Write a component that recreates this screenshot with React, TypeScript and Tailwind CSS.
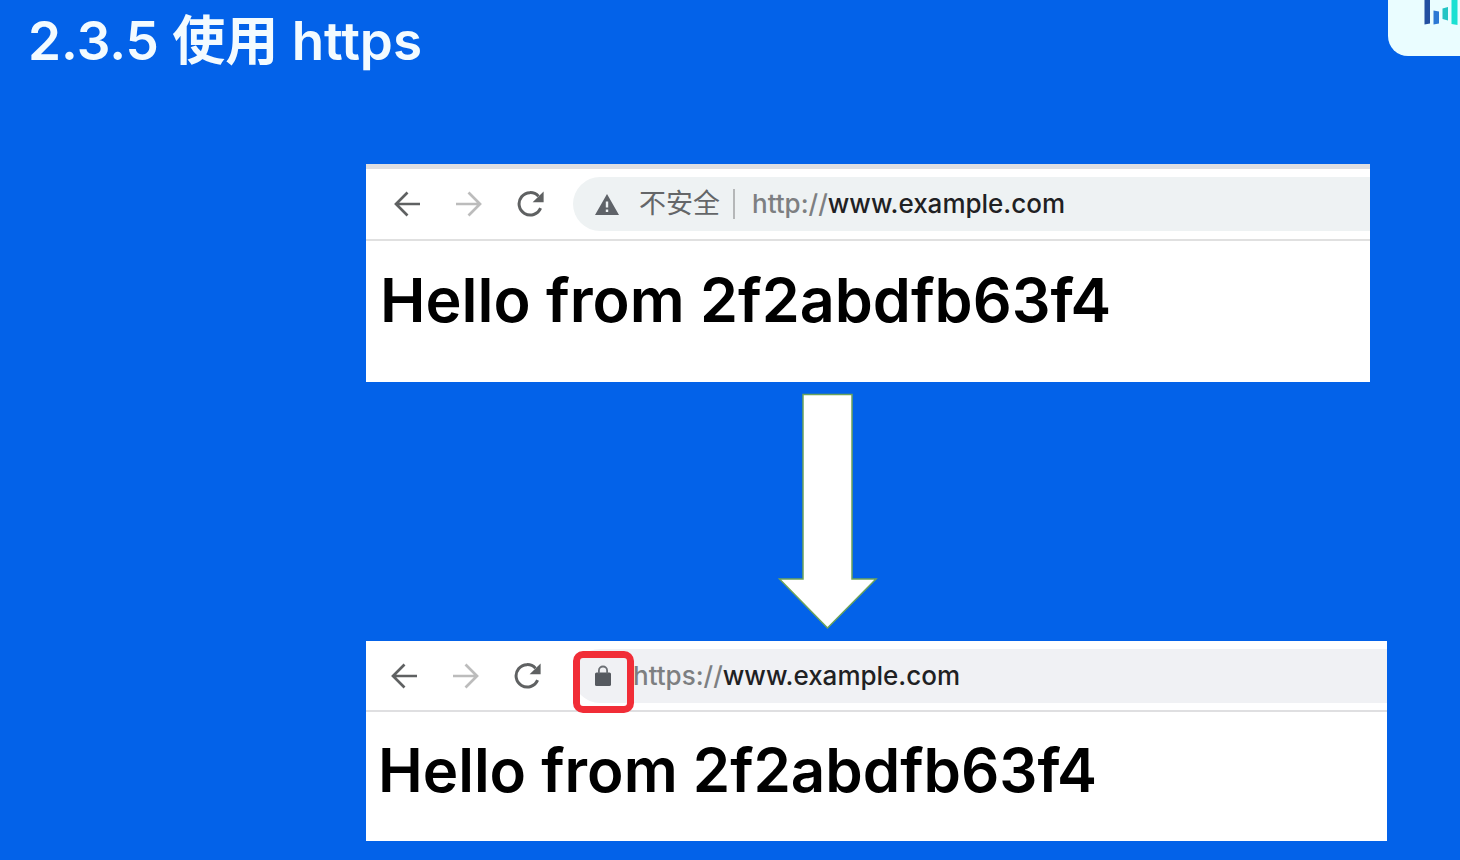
import type { ReactNode } from "react";

function BackIcon() {
  return (
    <svg className="size-7" viewBox="0 0 28 28" fill="none" stroke="currentColor" strokeWidth="2.7" aria-hidden="true">
      <path d="M27 14H3.5M14.5 2.5 3 14 14.5 25.5" />
    </svg>
  );
}

function ForwardIcon() {
  return (
    <svg className="size-7" viewBox="0 0 28 28" fill="none" stroke="currentColor" strokeWidth="2.7" aria-hidden="true">
      <path d="M1 14H24.5M13.5 2.5 25 14 13.5 25.5" />
    </svg>
  );
}

function ReloadIcon() {
  return (
    <svg className="size-7" viewBox="0 0 28 28" fill="none" aria-hidden="true">
      <path d="M23.6 18.2A11.2 11.2 0 1 1 21.5 6.2" stroke="currentColor" strokeWidth="3" />
      <path d="M26.6 1.6V12.2H15.6Z" fill="currentColor" />
    </svg>
  );
}

function WarningIcon() {
  return (
    <svg className="h-6 w-6" viewBox="0 0 24 24" aria-hidden="true">
      <path fill="#5f6368" fillRule="evenodd" d="M12 2 24 23H0ZM10.8 9.5V15.5H13.2V9.5ZM10.8 17.5V20H13.2V17.5Z" />
    </svg>
  );
}

function LockIcon() {
  return (
    <svg className="h-6 w-5" viewBox="0 0 20 24" aria-hidden="true">
      <rect x="2" y="8.5" width="16" height="13.5" rx="1.6" fill="#565a60" />
      <path d="M5.9 9.5V6.6a4.1 4.1 0 0 1 8.2 0V9.5" fill="none" stroke="#6c7075" strokeWidth="1.8" />
    </svg>
  );
}

function NavButtons() {
  return (
    <nav aria-label="浏览器导航" className="flex items-center gap-[34px]">
      <button type="button" aria-label="后退" className="text-[#5f6162]"><BackIcon /></button>
      <button type="button" aria-label="前进" className="text-[#bcbcbc]"><ForwardIcon /></button>
      <button type="button" aria-label="重新加载" className="text-[#5f6162]"><ReloadIcon /></button>
    </nav>
  );
}

function Url({ scheme }: { scheme: string }) {
  return (
    <p className="whitespace-nowrap text-[26px] leading-8 font-medium text-[#1f2123]">
      <span className="text-[#7d7f81]">{scheme}</span>www.example.com
    </p>
  );
}

function PageHeading({ children }: { children: ReactNode }) {
  return <h2 className="whitespace-nowrap font-semibold text-black">{children}</h2>;
}

export default function App() {
  return (
    <main className="min-h-screen overflow-hidden bg-[#0362e9] pb-[19px] font-['Inter','Noto_Sans_CJK_SC',sans-serif]">
      <header className="flex h-[164px] items-start justify-between pl-[28px]">
        <h1 className="pt-[9px] text-[53px] leading-16 font-semibold text-[#f3fbff]">2.3.5 使用 https</h1>
        <div className="h-14 w-[72px] rounded-bl-[20px] bg-[#eafdff] pl-9">
          <svg className="h-7 w-9" viewBox="0 0 36 28" role="img" aria-label="标志">
            <path fill="#234fa0" d="M.5 0H6V23.5L.5 24.5Z" />
            <path fill="#2c78d4" d="M9.5 10.5 15 11.5V23.5L9.5 24.5Z" />
            <path fill="#22c4c4" d="M18.5 8.5 24 7V20.5L18.5 19Z" />
            <path fill="#1be0d2" d="M27.5 0H33.5V25L27.5 24Z" />
          </svg>
        </div>
      </header>

      <section className="mr-[90px] ml-[366px] h-[218px] border-t-[5px] border-[#dedee2] bg-white">
        <div className="flex h-[72px] items-center border-b-2 border-[#e0e0e0] pl-[27px]">
          <NavButtons />
          <div className="ml-7 flex h-[54px] flex-1 items-center rounded-l-full bg-[#eef2f3] pl-[22px]">
            <WarningIcon />
            <span className="ml-5 text-[27px] leading-8 whitespace-nowrap text-[#646668]">不安全</span>
            <span className="mr-[17px] ml-[13px] h-[30px] w-0.5 bg-[#b5b7b8]" />
            <Url scheme="http://" />
          </div>
        </div>
        <div className="px-3.5 pt-[21px] text-[61px] leading-[76px]">
          <PageHeading>Hello from 2f2abdfb63f4</PageHeading>
        </div>
      </section>

      <svg className="mt-[11px] ml-[778px] h-[237px] w-[100px]" viewBox="0 0 100 237" role="img" aria-label="向下箭头">
        <path d="M25 1.5H74V186H98L49.5 235 1.5 186H25Z" fill="#fff" stroke="#6ca35a" strokeWidth="1.5" />
      </svg>

      <section className="mt-[11px] mr-[73px] ml-[366px] h-[200px] bg-white">
        <div className="flex h-[71px] items-center border-b-2 border-[#dfdfe1] pl-[24px]">
          <NavButtons />
          <div className="ml-[31px] flex h-[54px] flex-1 items-center rounded-l-full bg-[#f0f1f4]">
            <span className="relative flex h-full w-[60px] items-center justify-center">
              <LockIcon />
              <span className="absolute top-[2px] left-0 h-[62px] w-[61px] rounded-[10px] border-[7px] border-[#f12d37]" />
            </span>
            <Url scheme="https://" />
          </div>
        </div>
        <div className="px-3 pt-[20px] text-[60px] leading-[76px]">
          <PageHeading>Hello from 2f2abdfb63f4</PageHeading>
        </div>
      </section>
    </main>
  );
}
